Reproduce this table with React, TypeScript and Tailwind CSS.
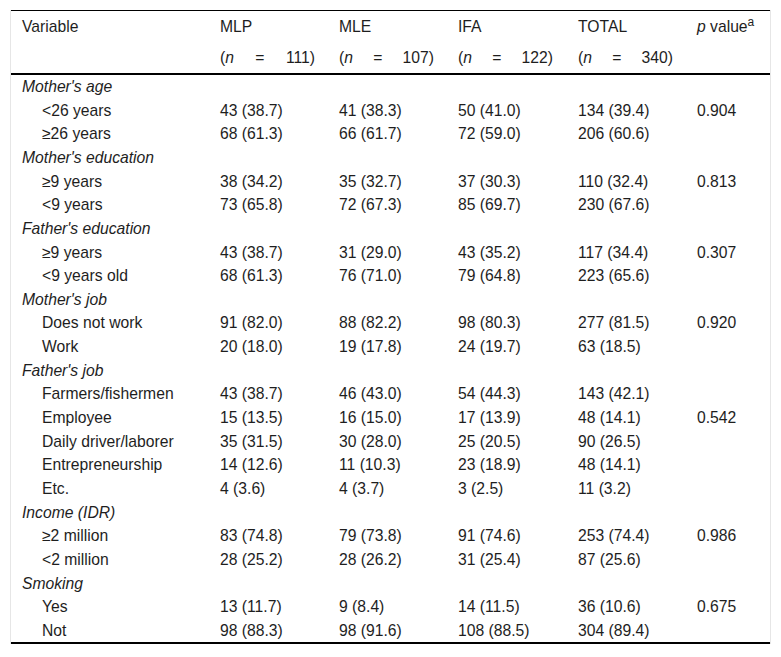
import React from "react"

type Row = { label: string; group?: boolean; cells?: string[]; p?: string }

const rows: Row[] = [
    { label: "Mother's age", group: true },
    { label: "<26 years", cells: ["43 (38.7)", "41 (38.3)", "50 (41.0)", "134 (39.4)"], p: "0.904" },
    { label: "≥26 years", cells: ["68 (61.3)", "66 (61.7)", "72 (59.0)", "206 (60.6)"] },
    { label: "Mother's education", group: true },
    { label: "≥9 years", cells: ["38 (34.2)", "35 (32.7)", "37 (30.3)", "110 (32.4)"], p: "0.813" },
    { label: "<9 years", cells: ["73 (65.8)", "72 (67.3)", "85 (69.7)", "230 (67.6)"] },
    { label: "Father's education", group: true },
    { label: "≥9 years", cells: ["43 (38.7)", "31 (29.0)", "43 (35.2)", "117 (34.4)"], p: "0.307" },
    { label: "<9 years old", cells: ["68 (61.3)", "76 (71.0)", "79 (64.8)", "223 (65.6)"] },
    { label: "Mother's job", group: true },
    { label: "Does not work", cells: ["91 (82.0)", "88 (82.2)", "98 (80.3)", "277 (81.5)"], p: "0.920" },
    { label: "Work", cells: ["20 (18.0)", "19 (17.8)", "24 (19.7)", "63 (18.5)"] },
    { label: "Father's job", group: true },
    { label: "Farmers/fishermen", cells: ["43 (38.7)", "46 (43.0)", "54 (44.3)", "143 (42.1)"] },
    { label: "Employee", cells: ["15 (13.5)", "16 (15.0)", "17 (13.9)", "48 (14.1)"], p: "0.542" },
    { label: "Daily driver/laborer", cells: ["35 (31.5)", "30 (28.0)", "25 (20.5)", "90 (26.5)"] },
    { label: "Entrepreneurship", cells: ["14 (12.6)", "11 (10.3)", "23 (18.9)", "48 (14.1)"] },
    { label: "Etc.", cells: ["4 (3.6)", "4 (3.7)", "3 (2.5)", "11 (3.2)"] },
    { label: "Income (IDR)", group: true },
    { label: "≥2 million", cells: ["83 (74.8)", "79 (73.8)", "91 (74.6)", "253 (74.4)"], p: "0.986" },
    { label: "<2 million", cells: ["28 (25.2)", "28 (26.2)", "31 (25.4)", "87 (25.6)"] },
    { label: "Smoking", group: true },
    { label: "Yes", cells: ["13 (11.7)", "9 (8.4)", "14 (11.5)", "36 (10.6)"], p: "0.675" },
    { label: "Not", cells: ["98 (88.3)", "98 (91.6)", "108 (88.5)", "304 (89.4)"] },
]

const cols = "grid grid-cols-[198px_119px_119px_120px_119px_1fr] pl-[11px]"

function N({ n }: { n: string }) {
    return (
        <div className="flex w-[95px] justify-between">
            <span>
                (<i>n</i>
            </span>
            <span>=</span>
            <span>{n})</span>
        </div>
    )
}

export default function App() {
    return (
        <div className="min-h-screen bg-white pt-[10px] pl-[10px] font-['Liberation_Sans',Arial,sans-serif] text-[15.7px] text-[#1e1e1e]">
            <div className="w-[761px] border-x border-[#e6e6e6]">
                <div className="border-t border-black">
                    <div className={`${cols} h-[32px] items-center`}>
                        <div>Variable</div>
                        <div>MLP</div>
                        <div>MLE</div>
                        <div>IFA</div>
                        <div>TOTAL</div>
                        <div>
                            <i>p</i> value<sup className="text-[12px]">a</sup>
                        </div>
                    </div>
                    <div className={`${cols} h-[32px] items-center border-b-2 border-black`}>
                        <div></div>
                        <N n="111" />
                        <N n="107" />
                        <N n="122" />
                        <N n="340" />
                        <div></div>
                    </div>
                </div>
                <div className="border-b-2 border-black">
                    {rows.map((r, i) =>
                        r.group ? (
                            <div key={i} className={`${cols} h-[23.65px] items-center`}>
                                <div className="col-span-6 italic">{r.label}</div>
                            </div>
                        ) : (
                            <div key={i} className={`${cols} h-[23.65px] items-center`}>
                                <div className="pl-[20px]">{r.label}</div>
                                {r.cells!.map((c, j) => (
                                    <div key={j}>{c}</div>
                                ))}
                                <div>{r.p ?? ""}</div>
                            </div>
                        )
                    )}
                </div>
            </div>
        </div>
    )
}
